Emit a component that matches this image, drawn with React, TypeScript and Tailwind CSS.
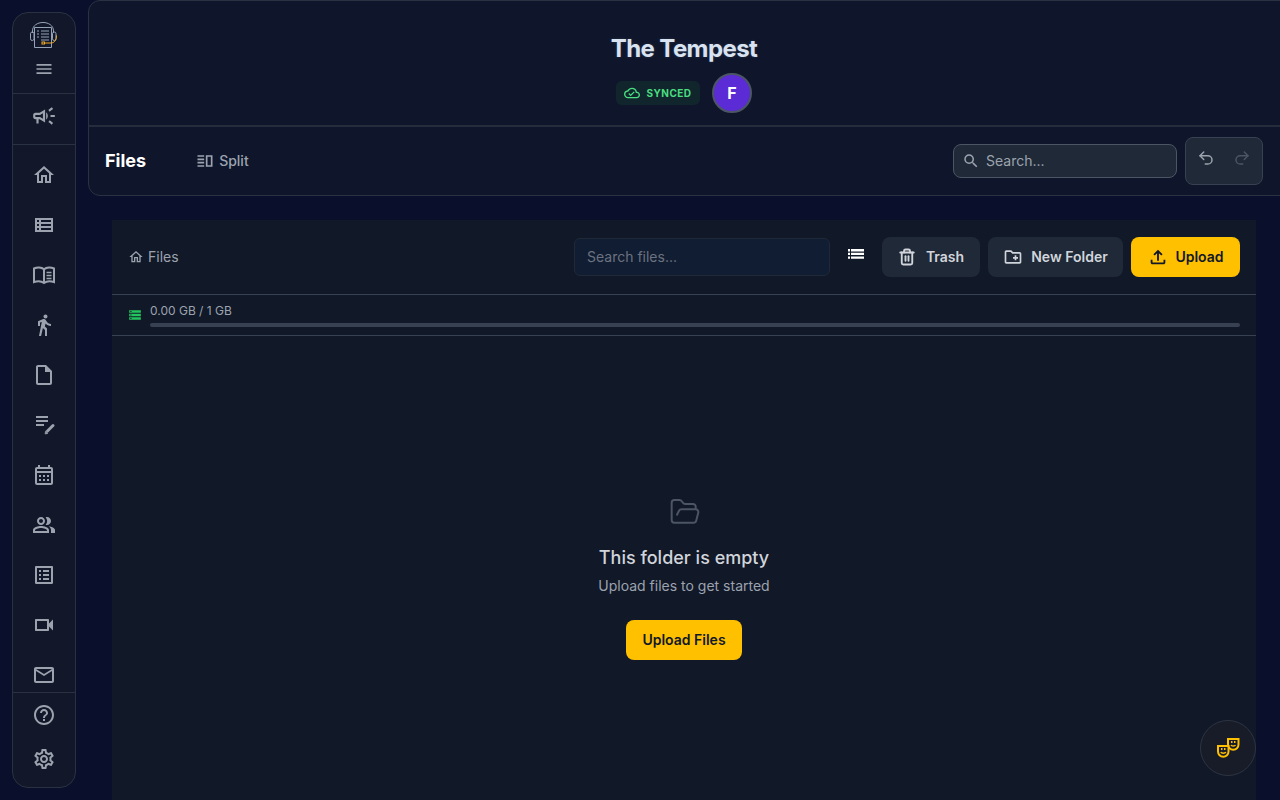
import type { IconType } from "react-icons";
import { FolderOpen, Redo2, Trash2, Undo2 } from "lucide-react";
import {
  MdDirectionsWalk,
  MdHelpOutline,
  MdMailOutline,
  MdMenu,
  MdOutlineCalendarMonth,
  MdOutlineCampaign,
  MdOutlineCloudDone,
  MdOutlineCreateNewFolder,
  MdOutlineFileUpload,
  MdOutlineHome,
  MdOutlineInsertDriveFile,
  MdOutlineListAlt,
  MdOutlinePeopleAlt,
  MdOutlineSettings,
  MdOutlineVerticalSplit,
  MdOutlineVideocam,
  MdOutlineViewList,
  MdSearch,
  MdStorage,
} from "react-icons/md";

function BookIcon({ size = 24 }: { size?: number }) {
  return (
    <svg width={size} height={size} viewBox="0 0 24 24" fill="none" stroke="currentColor" strokeWidth="2">
      <path d="M2 5.5c3-1.3 7.5-1.3 10 .7 2.5-2 7-2 10-.7V19c-3-1-7.5-1-10 1-2.5-2-7-2-10-1z" />
      <path d="M12 6v14" />
      <path d="M14.5 9.5h5M14.5 12.5h5M14.5 15.5h5" strokeWidth="1.6" />
    </svg>
  );
}

function NoteIcon({ size = 24 }: { size?: number }) {
  return (
    <svg width={size} height={size} viewBox="0 0 24 24" fill="none" stroke="currentColor">
      <path d="M4 4h12M4 8h12M4 12h8" strokeWidth="1.8" />
      <path d="M15.5 18l5.5-5.5" strokeWidth="3" strokeLinecap="round" />
      <path d="M13 21l.6-3 2.4 2.4z" fill="currentColor" strokeWidth="0.6" />
    </svg>
  );
}

function ListIcon() {
  return (
    <svg width="16" height="10" viewBox="0 0 16 10" fill="currentColor">
      <path d="M0 0h2v2.4H0zM3 0h13v2.4H3zM0 3.7h2v2.4H0zM3 3.7h13v2.4H3zM0 7.4h2v2.4H0zM3 7.4h13v2.4H3z" />
    </svg>
  );
}

function MasksIcon() {
  return (
    <svg width="24" height="24" viewBox="0 0 24 24" fill="none" stroke="currentColor" strokeWidth="2">
      <path d="M12 3h10.5v5.5a5.2 5.2 0 0 1-10.5 0z" />
      <path d="M15 6h1.5M18 6h1.5" />
      <path d="M15 9c.6 1.3 3.9 1.3 4.5 0" strokeWidth="1.4" />
      <path d="M2 10h10.5v5.5a5.2 5.2 0 0 1-10.5 0z" fill="#171c28" />
      <path d="M5 13h1.5M8 13h1.5" />
      <path d="M4.8 16c.6 1.6 4.4 1.6 5 0" strokeWidth="1.4" />
    </svg>
  );
}

const navItems: IconType[] = [
  MdOutlineHome,
  MdOutlineViewList,
  BookIcon as IconType,
  MdDirectionsWalk,
  MdOutlineInsertDriveFile,
  NoteIcon as IconType,
  MdOutlineCalendarMonth,
  MdOutlinePeopleAlt,
  MdOutlineListAlt,
  MdOutlineVideocam,
  MdMailOutline,
];

function Logo() {
  return (
    <svg width="28" height="28" viewBox="0 0 28 28" fill="none" strokeWidth="1">
      <path d="M2.5 12V10C2.5 4.5 7.5 1.5 13 1.5S23.5 4.5 23.5 10v2" stroke="#94a3b8" />
      <rect x="0.5" y="11" width="3.5" height="8.5" rx="1.7" stroke="#94a3b8" />
      <rect x="22.5" y="11" width="3.5" height="8.5" rx="1.7" stroke="#94a3b8" />
      <path d="M4.5 6.5h17v20h-17z" fill="#121829" stroke="#94a3b8" />
      <path d="M7 10h2M11 10h8M7 13h2M11 13h8M7 16h2M11 16h8M11 19h8" stroke="#94a3b8" />
      <rect x="12" y="21" width="2.5" height="2" stroke="#f0a929" />
      <path d="M14.5 22H21c3 0 5.5-2.5 5.5-7.5" stroke="#f0a929" />
    </svg>
  );
}

function Sidebar() {
  return (
    <aside className="flex h-[776px] w-16 shrink-0 flex-col overflow-hidden rounded-2xl border border-[#2a3242] bg-[#121829]">
      <div className="flex h-[81px] shrink-0 flex-col items-center border-b border-[#2a3242] pt-[8px]">
        <Logo />
        <MdMenu className="mt-[10px] text-[#9ca3af]" size={20} />
      </div>
      <div className="flex h-[51px] shrink-0 items-center justify-center border-b border-[#2a3242] pb-[6px] text-[#9ca3af]">
        <MdOutlineCampaign size={26} />
      </div>
      <nav className="flex min-h-0 flex-1 flex-col items-center overflow-hidden border-b border-[#2a3242] pt-[18px] text-[#9ca3af]">
        {navItems.map((Icon, i) => (
          <div key={i} className="flex h-[50px] w-full shrink-0 items-start justify-center">
            <Icon size={24} />
          </div>
        ))}
      </nav>
      <div className="flex h-[94px] shrink-0 flex-col items-center gap-[20px] pt-[10px] text-[#9ca3af]">
        <MdHelpOutline size={24} />
        <MdOutlineSettings size={24} />
      </div>
    </aside>
  );
}

function Header() {
  return (
    <header className="-mr-3 h-[196px] shrink-0 rounded-xl border border-[#2a3242] bg-[#0f162c]">
      <div className="flex h-[126px] flex-col items-center border-b-2 border-[#252c3c] pt-[32px] pr-3">
        <h1 className="text-2xl leading-8 font-bold tracking-tight text-[#d8e2f0] [text-shadow:0_0_3px_rgba(148,163,184,0.2)]">
          The Tempest
        </h1>
        <div className="mt-[8px] flex items-center gap-3">
          <span className="flex h-6 w-[84px] items-center justify-center gap-[6px] rounded-md bg-[#10262c] text-[10px] font-bold tracking-wider text-[#4ade80]">
            <MdOutlineCloudDone size={16} />
            SYNCED
          </span>
          <span className="flex h-10 w-10 items-center justify-center rounded-full border-2 border-[#4b5563] bg-[#5b2bd6] font-bold text-white">
            F
          </span>
        </div>
      </div>
      <div className="flex h-[68px] items-center pr-7 pl-4">
        <span className="text-lg font-bold text-white">Files</span>
        <span className="ml-[49px] flex items-center gap-1 text-sm font-medium text-[#9ca3af]">
          <MdOutlineVerticalSplit size={20} />
          Split
        </span>
        <div className="ml-auto flex h-[34px] w-56 items-center gap-[6px] rounded-lg border border-[#4b5563] bg-[#1f2937] pl-2 text-sm text-[#9ca3af]">
          <MdSearch size={18} />
          Search...
        </div>
        <div className="ml-2 flex h-12 w-[78px] items-start justify-center gap-[18px] rounded-lg border border-[#374151] bg-[#1f2937] pt-[11px]">
          <Undo2 size={18} className="text-[#9ca3af]" />
          <Redo2 size={18} className="text-[#4b5563]" />
        </div>
      </div>
    </header>
  );
}

function Toolbar() {
  return (
    <div className="flex h-[75px] items-center border-b border-[#374151] pr-4 pl-4">
      <div className="flex items-center gap-1 text-sm text-[#9ca3af]">
        <MdOutlineHome size={16} />
        Files
      </div>
      <div className="ml-auto flex h-[38px] w-64 items-center rounded-md border border-[#1f2937] bg-[#111d32] px-3 text-sm text-[#6b7280]">
        Search files...
      </div>
      <span className="mx-[18px] -mt-[6px] text-white">
        <ListIcon />
      </span>
      <button className="flex h-10 w-[98px] items-center justify-center gap-[10px] rounded-lg bg-[#1f2937] text-sm font-semibold text-[#d1d5db]">
        <Trash2 size={18} strokeWidth={2.5} />
        Trash
      </button>
      <button className="ml-2 flex h-10 w-[135px] items-center justify-center gap-2 rounded-lg bg-[#1f2937] text-sm font-semibold text-[#d1d5db]">
        <MdOutlineCreateNewFolder size={20} />
        New Folder
      </button>
      <button className="ml-2 flex h-10 w-[109px] items-center justify-center gap-[6px] rounded-lg bg-[#ffc000] text-sm font-semibold text-[#111827]">
        <MdOutlineFileUpload size={22} />
        Upload
      </button>
    </div>
  );
}

function Storage() {
  return (
    <div className="flex h-[41px] items-center gap-[8px] border-b border-[#374151] pr-4 pl-4">
      <MdStorage size={14} className="text-[#22c55e]" />
      <div className="flex-1">
        <div className="text-xs leading-4 text-[#9ca3af]">0.00 GB / 1 GB</div>
        <div className="mt-1 h-1 rounded-full bg-[#374151]" />
      </div>
    </div>
  );
}

function EmptyState() {
  return (
    <div className="flex flex-col items-center pt-40 text-center">
      <FolderOpen size={32} strokeWidth={1.5} className="ml-[2px] text-[#4b5563]" />
      <h2 className="mt-4 text-lg leading-7 font-medium text-[#d1d5db]">This folder is empty</h2>
      <p className="mt-[4px] text-sm leading-5 text-[#9ca3af]">Upload files to get started</p>
      <button className="mt-6 h-10 w-[116px] rounded-lg bg-[#ffc000] text-sm font-semibold text-[#111827]">
        Upload Files
      </button>
    </div>
  );
}

export default function App() {
  return (
    <div className="flex h-screen gap-3 overflow-hidden bg-[#0a0f2c] pl-3 font-['Inter',sans-serif]">
      <div className="pt-3">
        <Sidebar />
      </div>
      <main className="flex min-w-0 flex-1 flex-col">
        <Header />
        <div className="flex-1 overflow-hidden px-6 pt-6">
          <section className="h-full bg-[#111827]">
            <Toolbar />
            <Storage />
            <EmptyState />
          </section>
        </div>
      </main>
      <button className="absolute top-[720px] left-[1200px] flex h-14 w-14 items-center justify-center rounded-full border border-[#2e3442] bg-[#171c28] text-[#ffc000]">
        <MasksIcon />
      </button>
    </div>
  );
}
